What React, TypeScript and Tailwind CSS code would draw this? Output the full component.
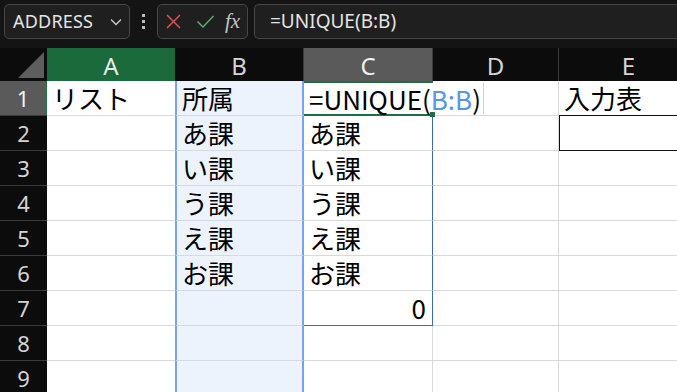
import React from "react";

const cols = [
  { key: "A", w: "w-[128px]" },
  { key: "B", w: "w-[129px]" },
  { key: "C", w: "w-[129px]" },
  { key: "D", w: "w-[126px]" },
  { key: "E", w: "w-[140px]" },
];

const data: Record<number, Record<string, string>> = {
  1: { A: "リスト", B: "所属", E: "入力表" },
  2: { B: "あ課", C: "あ課" },
  3: { B: "い課", C: "い課" },
  4: { B: "う課", C: "う課" },
  5: { B: "え課", C: "え課" },
  6: { B: "お課", C: "お課" },
  7: { C: "0" },
};

const cellClass = (col: string, row: number) => {
  if (col === "A") return "border-b border-[#d9d9d9] bg-white";
  if (col === "B")
    return "border-x-2 border-x-[#76a4e9] border-b border-b-[#d5dbe6] bg-[#edf3fd]";
  if (col === "C") {
    if (row === 1) return "border-y-2 border-y-[#1f6d42] border-r border-r-[#3b6ab3] bg-white";
    if (row === 7) return "border-r border-b border-[#3b6ab3] bg-white";
    if (row < 7) return "border-r border-r-[#3b6ab3] border-b border-b-[#d9d9d9] bg-white";
    return "border-r border-b border-[#d9d9d9] bg-white";
  }
  if (col === "E" && row === 2) return "border border-[#111111] -mt-px h-[36px] bg-white";
  return "border-r border-b border-[#d9d9d9]";
};

const Toolbar = () => (
  <div className="flex h-[48px] items-start gap-0 bg-[#141414] pt-[4px] pl-[4px]">
    <div className="flex h-[35px] w-[126px] shrink-0 items-center justify-between rounded-[5px] border border-[#474747] bg-[#1f1f1f] pl-[8px] pr-[7px]">
      <span className="text-[18px] tracking-[0.2px] text-[#e4e4e4]">ADDRESS</span>
      <svg width="12" height="8" viewBox="0 0 12 8" fill="none">
        <path d="M1 1.5l5 5 5-5" stroke="#cfcfcf" strokeWidth="1.3" />
      </svg>
    </div>
    <div className="flex h-[35px] w-[27px] shrink-0 flex-col items-center justify-center gap-[3px]">
      <span className="h-[3px] w-[3px] bg-[#bdbdbd]" />
      <span className="h-[3px] w-[3px] bg-[#bdbdbd]" />
      <span className="h-[3px] w-[3px] bg-[#bdbdbd]" />
    </div>
    <div className="flex h-[35px] w-[91px] shrink-0 items-center rounded-[5px] border border-[#474747] bg-[#1f1f1f] pl-[7px]">
      <svg width="17" height="17" viewBox="0 0 17 17" fill="none">
        <path d="M2 2l13 13M15 2L2 15" stroke="#e05252" strokeWidth="1.5" />
      </svg>
      <svg className="ml-[14px]" width="19" height="15" viewBox="0 0 19 15" fill="none">
        <path d="M1.5 7.5l5.5 5.5L17.5 2" stroke="#55b16a" strokeWidth="1.5" />
      </svg>
      <span className="ml-[10px] font-['Liberation_Serif',serif] text-[21px] italic leading-none text-[#c4c4c4]">
        fx
      </span>
    </div>
    <div className="ml-[6px] flex h-[35px] flex-1 items-center rounded-l-[5px] border border-r-0 border-[#474747] bg-[#1f1f1f] pl-[15px]">
      <span className="text-[19px] text-[#e4e4e4]">=UNIQUE(B:B)</span>
    </div>
  </div>
);

const HeaderRow = () => (
  <div className="flex h-[33px] bg-[#0c0c0c]">
    <div className="flex w-[47px] shrink-0 items-end justify-end pb-[3px] pr-[3px]">
      <svg width="26" height="26" viewBox="0 0 26 26">
        <path d="M26 0V26H0Z" fill="#5e5e5e" />
      </svg>
    </div>
    {cols.map((c) => (
      <div
        key={c.key}
        className={`${c.w} flex shrink-0 items-center justify-center pt-[2px] text-[24px] ${
          c.key === "A"
            ? "bg-[#1b6a3c] text-[#e8e8e8]"
            : c.key === "C"
            ? "border-r border-[#3a3a3a] bg-[#5a5a5a] text-[#f0f0f0]"
            : "border-r border-[#3a3a3a] text-[#d4d4d4]"
        }`}
      >
        {c.key}
      </div>
    ))}
  </div>
);

export default function App() {
  const rows = [1, 2, 3, 4, 5, 6, 7, 8, 9];
  return (
    <div className="h-[392px] w-[677px] overflow-hidden bg-[#0c0c0c] font-['Noto_Sans','Noto_Sans_CJK_JP',sans-serif]">
      <Toolbar />
      <HeaderRow />
      <div className="bg-white">
        {rows.map((r) => (
          <div key={r} className="flex h-[35px]">
            <div
              className={`flex w-[47px] shrink-0 items-center justify-center border-b border-[#3a3a3a] text-[22px] ${
                r === 1 ? "bg-[#5a5a5a] text-[#f2f2f2]" : "bg-[#0c0c0c] text-[#d4d4d4]"
              } ${r === 1 ? "border-r border-r-[#1f6d42]" : ""}`}
            >
              {r}
            </div>
            {cols.map((c) => {
              const v = data[r]?.[c.key];
              const isFormula = c.key === "C" && r === 1;
              return (
                <div
                  key={c.key}
                  className={`${c.w} relative flex shrink-0 items-center font-['Noto_Sans_CJK_JP',sans-serif] text-[26px] leading-none text-black ${cellClass(
                    c.key,
                    r
                  )} ${r === 7 && c.key === "C" ? "justify-end pr-[6px]" : "pl-[5px]"} ${
                    isFormula ? "z-10 overflow-visible whitespace-nowrap" : ""
                  }`}
                >
                  {isFormula ? (
                    <span className="flex h-full items-center border-r border-[#d0d0d0] bg-white pr-[2px]">
                      =UNIQUE(<span className="text-[#5b95e3]">B:B</span>)
                    </span>
                  ) : (
                    v
                  )}
                  {isFormula && (
                    <span className="absolute -right-[3px] -bottom-[3px] h-[5px] w-[5px] bg-[#1f6d42]" />
                  )}
                </div>
              );
            })}
          </div>
        ))}
      </div>
    </div>
  );
}
